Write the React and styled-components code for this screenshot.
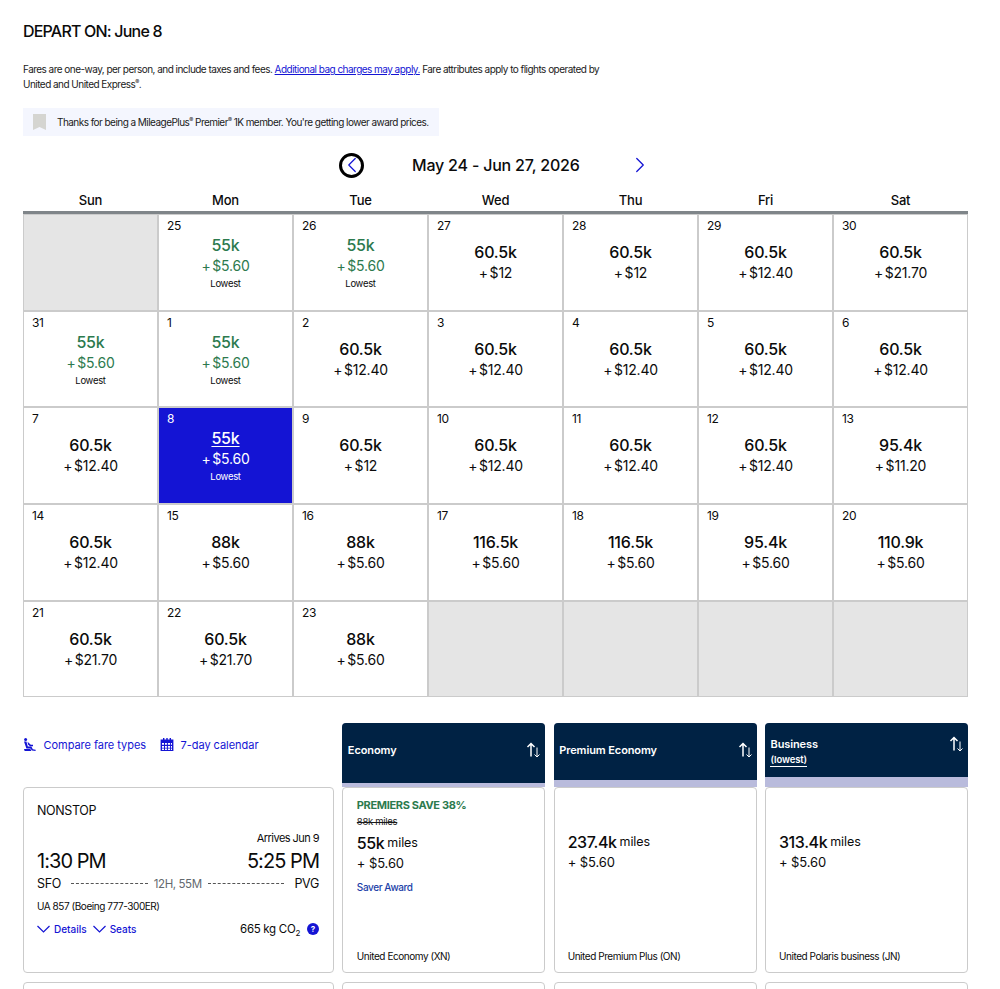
import React from 'react';
import styled, { createGlobalStyle } from 'styled-components';
import { ChevronLeft, ChevronRight } from 'lucide-react';

const GlobalStyle = createGlobalStyle`
  html, body {
    margin: 0;
    height: 100%;
    overflow: hidden;
    background: #fff;
  }
  * { box-sizing: border-box; }
  body {
    font-family: Inter, "Liberation Sans", sans-serif;
    color: #0b0b0b;
  }
`;

const weekdays = ['Sun', 'Mon', 'Tue', 'Wed', 'Thu', 'Fri', 'Sat'];

const low = { miles: '55k', tax: '$5.60', lowest: true };
const f = (miles, tax) => ({ miles, tax });

const days = [
  { empty: true },
  { day: 25, ...low },
  { day: 26, ...low },
  { day: 27, ...f('60.5k', '$12') },
  { day: 28, ...f('60.5k', '$12') },
  { day: 29, ...f('60.5k', '$12.40') },
  { day: 30, ...f('60.5k', '$21.70') },
  { day: 31, ...low },
  { day: 1, ...low },
  { day: 2, ...f('60.5k', '$12.40') },
  { day: 3, ...f('60.5k', '$12.40') },
  { day: 4, ...f('60.5k', '$12.40') },
  { day: 5, ...f('60.5k', '$12.40') },
  { day: 6, ...f('60.5k', '$12.40') },
  { day: 7, ...f('60.5k', '$12.40') },
  { day: 8, ...low, selected: true },
  { day: 9, ...f('60.5k', '$12') },
  { day: 10, ...f('60.5k', '$12.40') },
  { day: 11, ...f('60.5k', '$12.40') },
  { day: 12, ...f('60.5k', '$12.40') },
  { day: 13, ...f('95.4k', '$11.20') },
  { day: 14, ...f('60.5k', '$12.40') },
  { day: 15, ...f('88k', '$5.60') },
  { day: 16, ...f('88k', '$5.60') },
  { day: 17, ...f('116.5k', '$5.60') },
  { day: 18, ...f('116.5k', '$5.60') },
  { day: 19, ...f('95.4k', '$5.60') },
  { day: 20, ...f('110.9k', '$5.60') },
  { day: 21, ...f('60.5k', '$21.70') },
  { day: 22, ...f('60.5k', '$21.70') },
  { day: 23, ...f('88k', '$5.60') },
  { empty: true },
  { empty: true },
  { empty: true },
  { empty: true },
];

const fares = [
  { name: 'Economy', bar: 60, miles: '55k', code: 'United Economy (XN)', saver: true },
  { name: 'Premium Economy', bar: 57, miles: '237.4k', code: 'United Premium Plus (ON)' },
  { name: 'Business', bar: 54, miles: '313.4k', code: 'United Polaris business (JN)', lowest: true },
];

const Page = styled.div`
  height: 100vh;
  overflow: hidden;
  padding: 22px 32px 0 23px;
`;

const Title = styled.h1`
  margin: 0;
  font-size: 16px;
  line-height: 19px;
  font-weight: 500;
  letter-spacing: -0.8px;
`;

const Note = styled.p`
  margin: 21px 0 0;
  width: 585px;
  font-size: 10px;
  line-height: 15px;
  letter-spacing: -0.53px;
  color: #1a1a1a;

  a {
    color: #1414d4;
    text-decoration: underline;
  }
  sup {
    font-size: 6px;
    line-height: 0;
  }
`;

const Banner = styled.div`
  display: flex;
  align-items: center;
  gap: 11px;
  width: 416px;
  height: 28px;
  margin-top: 16px;
  padding-left: 10px;
  background: #f4f6fe;
  font-size: 10px;
  white-space: nowrap;
  letter-spacing: -0.54px;
  color: #1a1a1a;

  sup {
    font-size: 6px;
    line-height: 0;
  }
`;

const MonthNav = styled.div`
  display: flex;
  align-items: center;
  height: 26px;
  margin: 16px 0 0 316px;
`;

const RoundButton = styled.button`
  display: flex;
  flex: none;
  align-items: center;
  justify-content: center;
  width: 25px;
  height: 25px;
  padding: 0;
  border: 3px solid #000;
  border-radius: 50%;
  background: #fff;
  color: #1414d4;

  svg {
    flex: none;
  }
`;

const MonthLabel = styled.div`
  margin: 0 47px 0 48px;
  font-size: 16px;
  font-weight: 500;
  white-space: nowrap;
  letter-spacing: -0.2px;
`;

const PlainButton = styled.button`
  display: flex;
  padding: 0;
  border: 0;
  background: none;
  color: #1414d4;
`;

const Weekdays = styled.div`
  display: grid;
  grid-template-columns: repeat(7, 1fr);
  margin-top: 13px;
  height: 20px;
  font-size: 13px;
  line-height: 19px;
  font-weight: 500;
  text-align: center;
  letter-spacing: -0.2px;
`;

const Calendar = styled.div`
  display: grid;
  grid-template-columns: repeat(7, 135px);
  grid-auto-rows: 96.65px;
  width: 945px;
  border-top: 3px solid #7f8589;
`;

const Cell = styled.div`
  display: flex;
  flex-direction: column;
  align-items: center;
  padding-top: ${(p) => (p.$lowest ? '20px' : '27px')};
  position: relative;
  border: 1px solid #cbcbcb;
  background: ${(p) => (p.$empty ? '#e5e5e5' : p.$selected ? '#1414d4' : '#fff')};
  color: ${(p) => (p.$selected ? '#fff' : p.$lowest ? '#2c7a4e' : '#0b0b0b')};
`;

const DayNum = styled.span`
  position: absolute;
  top: 4px;
  left: 8px;
  font-size: 12px;
  line-height: 14px;
  letter-spacing: -0.3px;
  color: ${(p) => (p.$selected ? '#fff' : '#0b0b0b')};
`;

const Miles = styled.div`
  font-size: 16px;
  line-height: 20px;
  font-weight: 500;
  letter-spacing: -0.2px;
  text-decoration: ${(p) => (p.$selected ? 'underline' : 'none')};
  text-decoration-thickness: 1px;
  text-underline-offset: 2px;
`;

const Tax = styled.div`
  margin-top: 1px;
  font-size: 14px;
  line-height: 19px;
  letter-spacing: -0.2px;
  word-spacing: -2px;
`;

const Lowest = styled.div`
  margin-top: 2px;
  font-size: 9.5px;
  line-height: 13px;
  letter-spacing: -0.3px;
  color: ${(p) => (p.$selected ? '#fff' : '#0b0b0b')};
`;

const Results = styled.div`
  display: grid;
  grid-template-columns: 311px 203px 203px 203px;
  column-gap: 8.33px;
  grid-template-rows: 64px 186px 49px;
  margin-top: 25.75px;
`;

const Tools = styled.div`
  display: flex;
  align-items: flex-start;
  gap: 14px;
  padding-top: 14px;
  font-size: 11px;
  line-height: 16px;
  letter-spacing: -0.04px;
  color: #1414d4;
`;

const Tool = styled.a`
  display: flex;
  align-items: center;
  gap: 6.5px;
`;

const FareHead = styled.div`
  display: flex;
  flex-direction: column;
  height: 64px;
  border-radius: 4px 4px 0 0;
  overflow: hidden;
  background: #b9bbdc;
`;

const HeadBar = styled.div`
  display: flex;
  justify-content: space-between;
  height: ${(p) => p.$height}px;
  padding: ${(p) => (p.$lowest ? '13px 4px 0 5.5px' : '19px 4px 0 5.5px')};
  background: #002244;
  color: #fff;
  font-size: 11px;
  line-height: 16px;
  font-weight: 600;
  letter-spacing: -0.1px;
`;

const LowestLink = styled.span`
  display: table;
  margin-top: 1px;
  font-size: 9.5px;
  line-height: 13px;
  border-bottom: 1px solid #fff;
`;

const Card = styled.div`
  border: 1px solid #cbcbcb;
  border-radius: 4px;
  background: #fff;
`;

const NextCard = styled(Card)`
  margin-top: 9px;
`;

const FlightCard = styled(Card)`
  padding: 14px 14px 0 13px;
`;

const Stops = styled.div`
  font-size: 12.5px;
  line-height: 17px;
  letter-spacing: -0.35px;
`;

const Arrives = styled.div`
  margin-top: 12px;
  text-align: right;
  font-size: 11px;
  line-height: 15px;
  letter-spacing: -0.55px;
`;

const TimeRow = styled.div`
  display: flex;
  justify-content: space-between;
  margin-top: 2px;
  font-size: 20px;
  line-height: 26px;
  letter-spacing: -0.95px;
`;

const RouteRow = styled.div`
  display: flex;
  align-items: center;
  gap: 10px;
  margin-top: 2px;
  font-size: 12.5px;
  line-height: 16px;
  letter-spacing: -0.3px;
`;

const Dashes = styled.span`
  flex: 1;
  border-top: 1px dashed #555;
`;

const Duration = styled.span`
  margin: 0 -4px;
  font-size: 11.5px;
  letter-spacing: -0.4px;
  color: #63696e;
`;

const Aircraft = styled.div`
  margin-top: 7px;
  font-size: 10px;
  line-height: 15px;
  letter-spacing: -0.45px;
`;

const LinksRow = styled.div`
  display: flex;
  align-items: center;
  margin-top: 7px;
  height: 16px;
`;

const DetailLink = styled.a`
  display: flex;
  align-items: center;
  gap: 4px;
  margin-right: 6px;
  font-size: 10px;
  font-weight: 500;
  color: #1414d4;
`;

const Co2 = styled.span`
  margin-left: auto;
  font-size: 11.5px;
  letter-spacing: -0.3px;

  sub {
    font-size: 8px;
    line-height: 0;
  }
`;

const HelpDot = styled.span`
  display: flex;
  align-items: center;
  justify-content: center;
  width: 12px;
  height: 12px;
  margin-left: 7px;
  border-radius: 50%;
  background: #1414d4;
  color: #fff;
  font-size: 8px;
  font-weight: 700;
`;

const FareCard = styled(Card)`
  display: flex;
  flex-direction: column;
  padding: ${(p) => (p.$saver ? '10px 13.5px 8px' : '41px 13px 8px')};
`;

const Saving = styled.div`
  font-size: 11px;
  line-height: 14px;
  font-weight: 700;
  letter-spacing: -0.35px;
  color: #2c7a4e;
`;

const Struck = styled.div`
  margin-top: 3px;
  font-size: 9.5px;
  line-height: 14px;
  letter-spacing: -0.3px;
  text-decoration: line-through;
  color: #1a1a1a;
`;

const FareMiles = styled.div`
  margin-top: ${(p) => (p.$saver ? '4.5px' : '3px')};
  font-size: 16px;
  line-height: 20px;
  font-weight: 500;
  letter-spacing: -0.4px;

  small {
    margin-left: 3px;
    font-size: 12.5px;
    font-weight: 400;
    vertical-align: 2px;
    letter-spacing: -0.1px;
  }
`;

const FareTax = styled.div`
  margin-top: 1px;
  font-size: 13px;
  line-height: 19px;
  letter-spacing: -0.1px;
`;

const Saver = styled.div`
  margin-top: 7px;
  font-size: 10px;
  line-height: 14px;
  font-weight: 500;
  letter-spacing: -0.4px;
  color: #1c3fa8;
`;

const FareCode = styled.div`
  margin-top: auto;
  font-size: 10px;
  line-height: 15px;
  letter-spacing: -0.45px;
`;

const Seat = () => (
  <svg width="14" height="14" viewBox="0 0 14 14" fill="currentColor">
    <circle cx="2.6" cy="1.6" r="1.5" />
    <path d="M1 3.6h2.4l1.4 5h3.6l1.4 2.6 2.8.6V13L9 12.4 7.4 10.4H3.4z" />
    <path d="M4.6 3.8l3.2 3H10v1.4H7L5 6.6z" />
    <path d="M1 11h6.4l1 2H1.6z" />
  </svg>
);

const CalendarIcon = () => (
  <svg width="14" height="14" viewBox="0 0 14 14" fill="currentColor">
    <path d="M3 0h1.4v1.6H6.3V0h1.4v1.6h1.9V0H11v1.6h2.4V13H.6V1.6H3zM2 5v1.8h2V5zm3 0v1.8h1.9V5zm2.9 0v1.8H10V5zm3 0v1.8H12V5zM2 8v1.7h2V8zm3 0v1.7h1.9V8zm2.9 0v1.7H10V8zm3 0v1.7H12V8zM2 10.6v1.3h2v-1.3zm3 0v1.3h1.9v-1.3zm2.9 0v1.3H10v-1.3zm3 0v1.3H12v-1.3z" />
  </svg>
);

const Bookmark = () => (
  <svg width="13" height="16" viewBox="0 0 13 16" fill="#d5d5d1">
    <path d="M0 0h13v16L6.5 13 0 16z" />
  </svg>
);

const SortArrows = () => (
  <svg width="15" height="16" viewBox="0 0 15 16" fill="none" stroke="#fff">
    <path d="M5 14.5V1.5M1.5 5L5 1.5 8.5 5" strokeWidth="1.5" />
    <path d="M11 5.5v9.5M8.5 12.5L11 15l2.5-2.5" strokeWidth="1" />
  </svg>
);

const WideChevron = () => (
  <svg width="13" height="8" viewBox="0 0 13 8" fill="none" stroke="currentColor" strokeWidth="1.2">
    <path d="M.5 1l6 6 6-6" />
  </svg>
);

const App = () => (
  <Page>
    <GlobalStyle />
    <Title>DEPART ON: June 8</Title>
    <Note>
      Fares are one-way, per person, and include taxes and fees.{' '}
      <a href="#bags">Additional bag charges may apply.</a> Fare attributes apply to flights operated by
      United and United Express<sup>®</sup>.
    </Note>
    <Banner>
      <Bookmark />
      <span>
        Thanks for being a MileagePlus<sup>®</sup> Premier<sup>®</sup> 1K member. You're getting lower award prices.
      </span>
    </Banner>

    <MonthNav>
      <RoundButton aria-label="Previous">
        <ChevronLeft size={26} strokeWidth={1.1} />
      </RoundButton>
      <MonthLabel>May 24 - Jun 27, 2026</MonthLabel>
      <PlainButton aria-label="Next">
        <ChevronRight size={26} strokeWidth={1.2} />
      </PlainButton>
    </MonthNav>

    <Weekdays>
      {weekdays.map((d) => (
        <div key={d}>{d}</div>
      ))}
    </Weekdays>
    <Calendar>
      {days.map((d, i) => (
        <Cell key={i} $empty={d.empty} $selected={d.selected} $lowest={d.lowest}>
          {!d.empty && (
            <>
              <DayNum $selected={d.selected}>{d.day}</DayNum>
              <Miles $selected={d.selected}>{d.miles}</Miles>
              <Tax>+ {d.tax}</Tax>
              {d.lowest && <Lowest $selected={d.selected}>Lowest</Lowest>}
            </>
          )}
        </Cell>
      ))}
    </Calendar>

    <Results>
      <Tools>
        <Tool>
          <Seat /> Compare fare types
        </Tool>
        <Tool>
          <CalendarIcon /> 7-day calendar
        </Tool>
      </Tools>
      {fares.map((fare) => (
        <FareHead key={fare.name}>
          <HeadBar $height={fare.bar} $lowest={fare.lowest}>
            <div>
              {fare.name}
              {fare.lowest && <LowestLink>(lowest)</LowestLink>}
            </div>
            <SortArrows />
          </HeadBar>
        </FareHead>
      ))}

      <FlightCard>
        <Stops>NONSTOP</Stops>
        <Arrives>Arrives Jun 9</Arrives>
        <TimeRow>
          <span>1:30 PM</span>
          <span>5:25 PM</span>
        </TimeRow>
        <RouteRow>
          <span>SFO</span>
          <Dashes />
          <Duration>12H, 55M</Duration>
          <Dashes />
          <span>PVG</span>
        </RouteRow>
        <Aircraft>UA 857 (Boeing 777-300ER)</Aircraft>
        <LinksRow>
          <DetailLink>
            <WideChevron /> Details
          </DetailLink>
          <DetailLink>
            <WideChevron /> Seats
          </DetailLink>
          <Co2>
            665 kg CO<sub>2</sub>
          </Co2>
          <HelpDot>?</HelpDot>
        </LinksRow>
      </FlightCard>
      {fares.map((fare) => (
        <FareCard key={fare.name} $saver={fare.saver}>
          {fare.saver && (
            <>
              <Saving>PREMIERS SAVE 38%</Saving>
              <Struck>88k miles</Struck>
            </>
          )}
          <FareMiles $saver={fare.saver}>
            {fare.miles}
            <small>miles</small>
          </FareMiles>
          <FareTax>+ $5.60</FareTax>
          {fare.saver && <Saver>Saver Award</Saver>}
          <FareCode>{fare.code}</FareCode>
        </FareCard>
      ))}

      <NextCard />
      <NextCard />
      <NextCard />
      <NextCard />
    </Results>
  </Page>
);

export default App;
